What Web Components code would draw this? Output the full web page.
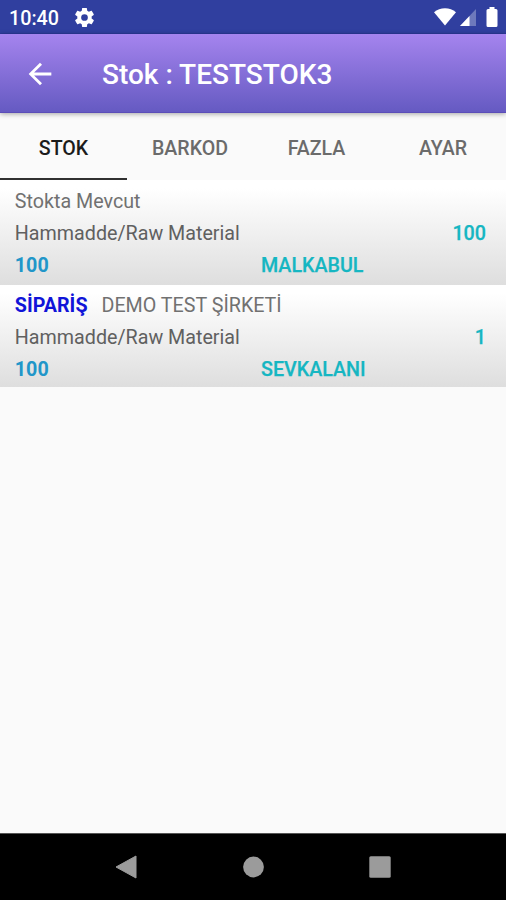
<!DOCTYPE html>
<html lang="tr">
<head>
<meta charset="utf-8">
<title>Stok : TESTSTOK3</title>
<style>
html,body{margin:0;height:100%;overflow:hidden}
body{font-family:Roboto,"Noto Sans",sans-serif;background:#fafafa}
</style>
</head>
<body>
<stock-screen></stock-screen>
<script>
function define(name, html) {
  const template = document.createElement('template');
  template.innerHTML = html;
  customElements.define(name, class extends HTMLElement {
    constructor() {
      super();
      this.attachShadow({ mode: 'open' }).append(template.content.cloneNode(true));
    }
  });
}

define('status-bar', `
<style>
:host{display:flex;align-items:center;height:34px;box-sizing:border-box;background:#303f9f;color:#fff;padding:1px 8px 0 9px;border-bottom:1px solid #2c3999}
.time{font-size:19.7px;font-weight:500;line-height:24px;width:63.5px;white-space:nowrap;padding-top:3px}
svg{display:block;fill:#fff}
.spacer{flex:1}
.wifi{margin-right:4px}.signal{margin-right:10px}
</style>
<span class="time">10:40</span>
<svg width="23" height="23" viewBox="0 0 24 24"><path d="M19.43 12.98c.04-.32.07-.64.07-.98s-.03-.66-.07-.98l2.11-1.65c.19-.15.24-.42.12-.64l-2-3.46c-.12-.22-.39-.3-.61-.22l-2.49 1c-.52-.4-1.08-.73-1.69-.98l-.38-2.65A.49.49 0 0 0 14 2h-4c-.25 0-.46.18-.49.42l-.38 2.65c-.61.25-1.17.59-1.69.98l-2.49-1c-.23-.09-.49 0-.61.22l-2 3.46c-.13.22-.07.49.12.64l2.11 1.65c-.04.32-.07.65-.07.98s.03.66.07.98l-2.11 1.65c-.19.15-.24.42-.12.64l2 3.46c.12.22.39.3.61.22l2.49-1c.52.4 1.08.73 1.69.98l.38 2.65c.03.24.24.42.49.42h4c.25 0 .46-.18.49-.42l.38-2.65c.61-.25 1.17-.59 1.69-.98l2.49 1c.23.09.49 0 .61-.22l2-3.46c.12-.22.07-.49-.12-.64zM12 15.5a3.5 3.5 0 1 1 0-7 3.5 3.5 0 0 1 0 7z"/></svg>
<span class="spacer"></span>
<svg class="wifi" width="22" height="18" viewBox="0 0 22 18"><path d="M0 4.2C6-1.2 16-1.2 22 4.2L11 17.6z"/></svg>
<svg class="signal" width="16" height="17" viewBox="0 0 16 17"><path d="M16 0v17H0z" opacity=".3"/><path d="M9.5 7v10H0z"/></svg>
<svg width="12" height="20" viewBox="0 0 12 20"><path d="M3.500 0h5v2H10a1.500 1.500 0 0 1 1.500 1.500v15a1.500 1.500 0 0 1-1.500 1.500H2a1.500 1.500 0 0 1-1.500-1.500v-15A1.500 1.500 0 0 1 2 2h1.500z"/></svg>
`);

define('app-bar', `
<style>
:host{display:flex;align-items:center;height:79px;box-sizing:border-box;padding:0 23px 0 22.5px;color:#fff;background:linear-gradient(#a584ee,#655ac2);border-bottom:1px solid #5b4db8;box-shadow:0 1px 5px rgba(0,0,0,.35);position:relative;z-index:1}
svg{display:block;width:34px;height:34px;fill:#fff;margin:1px 45.500px 0 0}
.title{font-size:28px;font-weight:500;line-height:34px;white-space:nowrap;padding-top:4px}
</style>
<svg viewBox="0 0 24 24"><path d="M20 11H7.830l5.590-5.590L12 4l-8 8 8 8 1.410-1.410L7.830 13H20z"/></svg>
<span class="title"><slot></slot></span>
`);

define('tab-item', `
<style>
:host{display:flex;align-items:center;justify-content:center;box-sizing:border-box;padding-top:5px;font-size:19.600px;font-weight:500;color:#6b6b6b;border-bottom:2px solid transparent}
:host([selected]){color:#1c1c1c;border-color:#303030}
</style>
<slot></slot>
`);

define('tab-strip', `
<style>
:host{display:grid;grid-template-columns:127px 126px 127px 126px;height:67px;background:#fafafa}
</style>
<slot></slot>
`);

define('stock-row', `
<style>
:host{display:flex;flex-direction:column;box-sizing:border-box;height:104.500px;padding:5.500px 20px 0 14.800px;background:linear-gradient(#fff 8%,#f0f0f0 50%,#dedede);font-size:19.700px;line-height:32px;white-space:nowrap;color:#717171}
.line{display:flex;height:32px}
.main{color:#606060;justify-content:space-between}
.qty,.place{color:#16b6c2;font-weight:500;-webkit-text-stroke:.25px #16b6c2}
.code{color:#2196c9;font-weight:700;width:246.200px}
::slotted([slot=type]){color:#1014d8;font-weight:700;margin-right:14px}
</style>
<div class="line"><slot name="type"></slot><slot name="head"></slot></div>
<div class="line main"><slot name="material"></slot><span class="qty"><slot name="qty"></slot></span></div>
<div class="line"><span class="code"><slot name="code"></slot></span><span class="place"><slot name="place"></slot></span></div>
`);

define('nav-bar', `
<style>
:host{display:grid;grid-template-columns:repeat(3,127px);justify-content:center;align-items:center;justify-items:center;height:67px;box-sizing:border-box;background:#000;border-top:1px solid #555}
svg{display:block;fill:#9b9b9b}
</style>
<svg width="22" height="24" viewBox="0 0 22 24"><path d="M21 1v22L1 12z" stroke="#9b9b9b" stroke-linejoin="round"/></svg>
<svg width="22" height="22" viewBox="0 0 22 22"><circle cx="11.500" cy="11" r="10.400"/></svg>
<svg width="22" height="22" viewBox="0 0 22 22"><rect x=".3" y=".3" width="21.400" height="21.400" rx="1.500"/></svg>
`);

define('stock-screen', `
<style>
:host{display:flex;flex-direction:column;width:506px;height:900px;background:#fafafa}
.content{flex:1}
.second{height:102.500px}
</style>
<status-bar></status-bar>
<app-bar>Stok : TESTSTOK3</app-bar>
<tab-strip><tab-item selected>STOK</tab-item><tab-item>BARKOD</tab-item><tab-item>FAZLA</tab-item><tab-item>AYAR</tab-item></tab-strip>
<div class="content">
<stock-row><span slot="head">Stokta Mevcut</span><span slot="material">Hammadde/Raw Material</span><span slot="qty">100</span><span slot="code">100</span><span slot="place">MALKABUL</span></stock-row>
<stock-row class="second"><span slot="type">SİPARİŞ</span><span slot="head">DEMO TEST ŞİRKETİ</span><span slot="material">Hammadde/Raw Material</span><span slot="qty">1</span><span slot="code">100</span><span slot="place">SEVKALANI</span></stock-row>
</div>
<nav-bar></nav-bar>
`);
</script>
</body>
</html>
